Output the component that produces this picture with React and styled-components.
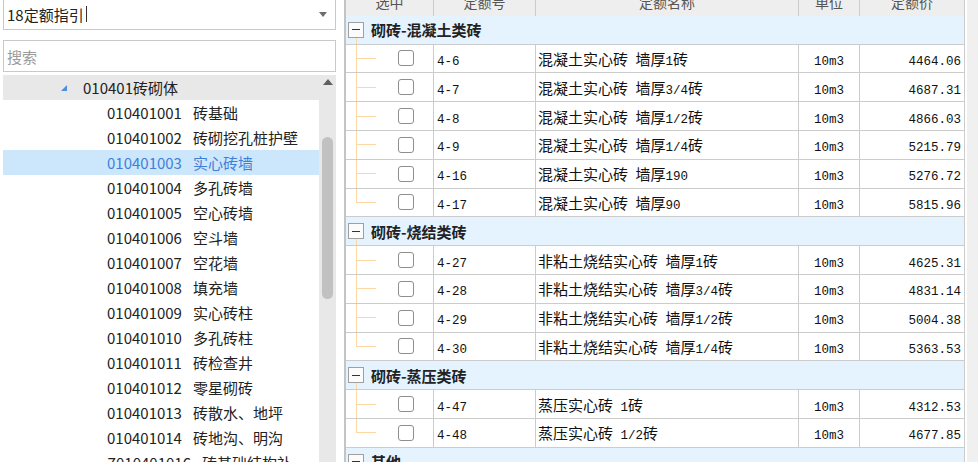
import React from "react";
import styled, { createGlobalStyle } from "styled-components";

const GlobalStyle = createGlobalStyle`
  html, body {
    margin: 0;
    padding: 0;
    background: #ffffff;
  }
  body {
    font-family: "Noto Sans CJK SC", "Noto Sans", sans-serif;
  }
`;

const treeItems = [
  ["010401001", "砖基础"],
  ["010401002", "砖砌挖孔桩护壁"],
  ["010401003", "实心砖墙"],
  ["010401004", "多孔砖墙"],
  ["010401005", "空心砖墙"],
  ["010401006", "空斗墙"],
  ["010401007", "空花墙"],
  ["010401008", "填充墙"],
  ["010401009", "实心砖柱"],
  ["010401010", "多孔砖柱"],
  ["010401011", "砖检查井"],
  ["010401012", "零星砌砖"],
  ["010401013", "砖散水、地坪"],
  ["010401014", "砖地沟、明沟"],
  ["Z010401016", "砖基础结构补"],
];

const groups = [
  {
    title: "砌砖-混凝土类砖",
    rows: [
      ["4-6", "混凝土实心砖 墙厚1砖", "10m3", "4464.06"],
      ["4-7", "混凝土实心砖 墙厚3/4砖", "10m3", "4687.31"],
      ["4-8", "混凝土实心砖 墙厚1/2砖", "10m3", "4866.03"],
      ["4-9", "混凝土实心砖 墙厚1/4砖", "10m3", "5215.79"],
      ["4-16", "混凝土实心砖 墙厚190", "10m3", "5276.72"],
      ["4-17", "混凝土实心砖 墙厚90", "10m3", "5815.96"],
    ],
  },
  {
    title: "砌砖-烧结类砖",
    rows: [
      ["4-27", "非粘土烧结实心砖 墙厚1砖", "10m3", "4625.31"],
      ["4-28", "非粘土烧结实心砖 墙厚3/4砖", "10m3", "4831.14"],
      ["4-29", "非粘土烧结实心砖 墙厚1/2砖", "10m3", "5004.38"],
      ["4-30", "非粘土烧结实心砖 墙厚1/4砖", "10m3", "5363.53"],
    ],
  },
  {
    title: "砌砖-蒸压类砖",
    rows: [
      ["4-47", "蒸压实心砖 1砖", "10m3", "4312.53"],
      ["4-48", "蒸压实心砖 1/2砖", "10m3", "4677.85"],
    ],
  },
  { title: "其他", rows: [] },
];

// half-width latin, like the SimSun grid font
const Latin = styled.span`
  font-family: "Liberation Mono", monospace;
  font-size: 12.5px;
`;

const Mixed = ({ text }) => (
  <span>
    {text
      .split(/([\x20-\x7e]+)/)
      .filter(Boolean)
      .map((part, i) =>
        /[\x20-\x7e]/.test(part[0]) ? (
          <Latin key={i}>{part}</Latin>
        ) : (
          <span key={i}>{part}</span>
        )
      )}
  </span>
);

const Page = styled.div`
  display: flex;
  width: 978px;
  height: 462px;
  overflow: hidden;
`;

/* ---------- left side ---------- */

const Left = styled.div`
  width: 336px;
  padding-left: 3px;
  box-sizing: border-box;
  display: flex;
  flex-direction: column;
  flex-shrink: 0;
`;

const Select = styled.div`
  height: 32px;
  margin-top: -2px;
  border: 1px solid #c9c9c9;
  box-sizing: border-box;
  display: flex;
  align-items: center;
  padding: 0 8px 0 3px;
  font-size: 15px;
  color: #222;
`;

const Caret = styled.span`
  width: 1px;
  height: 16px;
  background: #333;
  margin-left: 2px;
`;

const SelectArrow = styled.span`
  margin-left: auto;
  width: 0;
  height: 0;
  border-left: 4px solid transparent;
  border-right: 4px solid transparent;
  border-top: 5px solid #6d6d6d;
`;

const Search = styled.input`
  height: 32px;
  margin-top: 10px;
  border: 1px solid #c9c9c9;
  box-sizing: border-box;
  padding: 0 3px;
  font-family: "Noto Sans CJK SC", sans-serif;
  font-size: 15px;
  outline: none;
  &::placeholder {
    color: #9b9b9b;
  }
`;

const Tree = styled.div`
  flex: 1;
  margin-top: 3px;
  display: flex;
  overflow: hidden;
  min-height: 0;
`;

const TreeList = styled.div`
  flex: 1;
  display: flex;
  flex-direction: column;
  background: #fff;
`;

const TreeHead = styled.div`
  height: 25px;
  background: #e8e8e8;
  display: flex;
  align-items: center;
  padding-left: 57px;
  font-size: 15px;
  color: #222;
  flex-shrink: 0;
`;

const TreeLabel = styled.span`
  margin-left: 15px;
`;

const TreeRow = styled.div`
  height: 25px;
  flex-shrink: 0;
  display: flex;
  align-items: center;
  padding-left: 104px;
  font-size: 15px;
  color: ${(p) => (p.$selected ? "#3f7fd9" : "#222")};
  background: ${(p) => (p.$selected ? "#cce6fb" : "transparent")};
`;

const ItemName = styled.span`
  margin-left: 11px;
`;

const ScrollTrack = styled.div`
  width: 17px;
  background: #e8e8e8;
  display: flex;
  flex-direction: column;
  align-items: center;
  flex-shrink: 0;
`;

const ScrollUp = styled.svg`
  margin-top: 4px;
`;

const ScrollThumb = styled.div`
  width: 11px;
  height: 162px;
  margin-top: 52px;
  border-radius: 6px;
  background: #c1c1c1;
`;

/* ---------- right side ---------- */

const Right = styled.div`
  flex: 1;
  margin-left: 8px;
  display: flex;
  overflow: hidden;
`;

const Table = styled.div`
  width: 621px;
  border-left: 2px solid #c4c4c4;
  box-sizing: border-box;
  display: grid;
  grid-template-columns: 88px 102px 263px 61px 105px;
  grid-auto-rows: 28.8px;
  align-content: start;
  margin-top: -13px;
  font-size: 15px;
  color: #111;
`;

const HeadCell = styled.div`
  height: 30px;
  background: #eeeeee;
  border-right: 1px solid #cccccc;
  border-bottom: 1px solid #cccccc;
  box-sizing: border-box;
  display: flex;
  align-items: center;
  justify-content: center;
  color: #555;
  font-size: 14px;
`;

const GroupRow = styled.div`
  grid-column: 1 / -1;
  background: #e5f3fe;
  border-right: 1px solid #cccccc;
  border-bottom: 1px solid #cccccc;
  box-sizing: border-box;
  display: flex;
  align-items: stretch;
  padding-left: 2px;
`;

const ToggleCol = styled.div`
  width: 16px;
  display: flex;
  flex-direction: column;
`;

const ToggleSpace = styled.div`
  flex: 1;
`;

const ToggleStem = styled.div`
  flex: 1;
  margin-left: 8px;
  border-left: 1px solid #fdd7a4;
`;

const ToggleBox = styled.div`
  width: 16px;
  height: 16px;
  border: 1px solid #a0a0a0;
  box-sizing: border-box;
  background: #fbfbfb;
  display: flex;
  align-items: center;
  justify-content: center;
`;

const Minus = styled.span`
  width: 8px;
  height: 1px;
  background: #333;
`;

const GroupTitle = styled.span`
  align-self: center;
  margin-left: 7px;
  font-weight: 700;
  font-size: 15px;
  color: #222;
`;

const Cell = styled.div`
  border-right: 1px solid #cccccc;
  border-bottom: 1px solid #cccccc;
  box-sizing: border-box;
  display: flex;
  align-items: center;
  background: #fff;
  white-space: nowrap;
  overflow: hidden;
  padding: 0 ${(p) => p.$pad || 3}px;
  justify-content: ${(p) =>
    p.$align === "right" ? "flex-end" : p.$align === "center" ? "center" : "flex-start"};
`;

const SelectCell = styled(Cell)`
  align-items: stretch;
  padding-left: 10px;
`;

const Connector = styled.div`
  width: 20px;
  display: flex;
  flex-direction: column;
`;

const ConnectorTop = styled.div`
  flex: 1;
  border-left: 1px solid #fdd7a4;
  border-bottom: 1px solid #fdd7a4;
`;

const ConnectorBottom = styled.div`
  flex: 1;
  border-left: 1px solid ${(p) => (p.$last ? "transparent" : "#fdd7a4")};
`;

const Check = styled.div`
  align-self: center;
  width: 16px;
  height: 16px;
  margin-left: 22px;
  border: 1px solid #8e8e8e;
  border-radius: 3px;
  box-sizing: border-box;
  background: #fff;
`;

const ScrollStub = styled.div`
  flex: 1;
  margin-left: 2px;
  background: #f0f0f0;
`;

const App = () => {
  return (
    <Page>
      <GlobalStyle />
      <Left>
        <Select>
          18定额指引
          <Caret />
          <SelectArrow />
        </Select>
        <Search placeholder="搜索" />
        <Tree>
          <TreeList>
            <TreeHead>
              <svg width="8" height="8" viewBox="0 0 8 8">
                <polygon points="7,1 7,7 1,7" fill="#4a8fe0" />
              </svg>
              <TreeLabel>010401砖砌体</TreeLabel>
            </TreeHead>
            {treeItems.map(([code, name]) => (
              <TreeRow key={code} $selected={code === "010401003"}>
                <span>{code}</span>
                <ItemName>{name}</ItemName>
              </TreeRow>
            ))}
          </TreeList>
          <ScrollTrack>
            <ScrollUp width="10" height="6" viewBox="0 0 10 6">
              <polygon points="5,0 10,6 0,6" fill="#606060" />
            </ScrollUp>
            <ScrollThumb />
          </ScrollTrack>
        </Tree>
      </Left>

      <Right>
        <Table>
          {["选中", "定额号", "定额名称", "单位", "定额价"].map((h) => (
            <HeadCell key={h}>{h}</HeadCell>
          ))}
          {groups.map((g) => (
            <React.Fragment key={g.title}>
              <GroupRow>
                <ToggleCol>
                  <ToggleSpace />
                  <ToggleBox>
                    <Minus />
                  </ToggleBox>
                  <ToggleStem />
                </ToggleCol>
                <GroupTitle>{g.title}</GroupTitle>
              </GroupRow>
              {g.rows.map(([no, name, unit, price], i) => (
                <React.Fragment key={no}>
                  <SelectCell>
                    <Connector>
                      <ConnectorTop />
                      <ConnectorBottom $last={i === g.rows.length - 1} />
                    </Connector>
                    <Check />
                  </SelectCell>
                  <Cell>
                    <Mixed text={no} />
                  </Cell>
                  <Cell $pad={2}>
                    <Mixed text={name} />
                  </Cell>
                  <Cell $align="center">
                    <Mixed text={unit} />
                  </Cell>
                  <Cell $align="right">
                    <Mixed text={price} />
                  </Cell>
                </React.Fragment>
              ))}
            </React.Fragment>
          ))}
        </Table>
        <ScrollStub />
      </Right>
    </Page>
  );
};

export default App;
